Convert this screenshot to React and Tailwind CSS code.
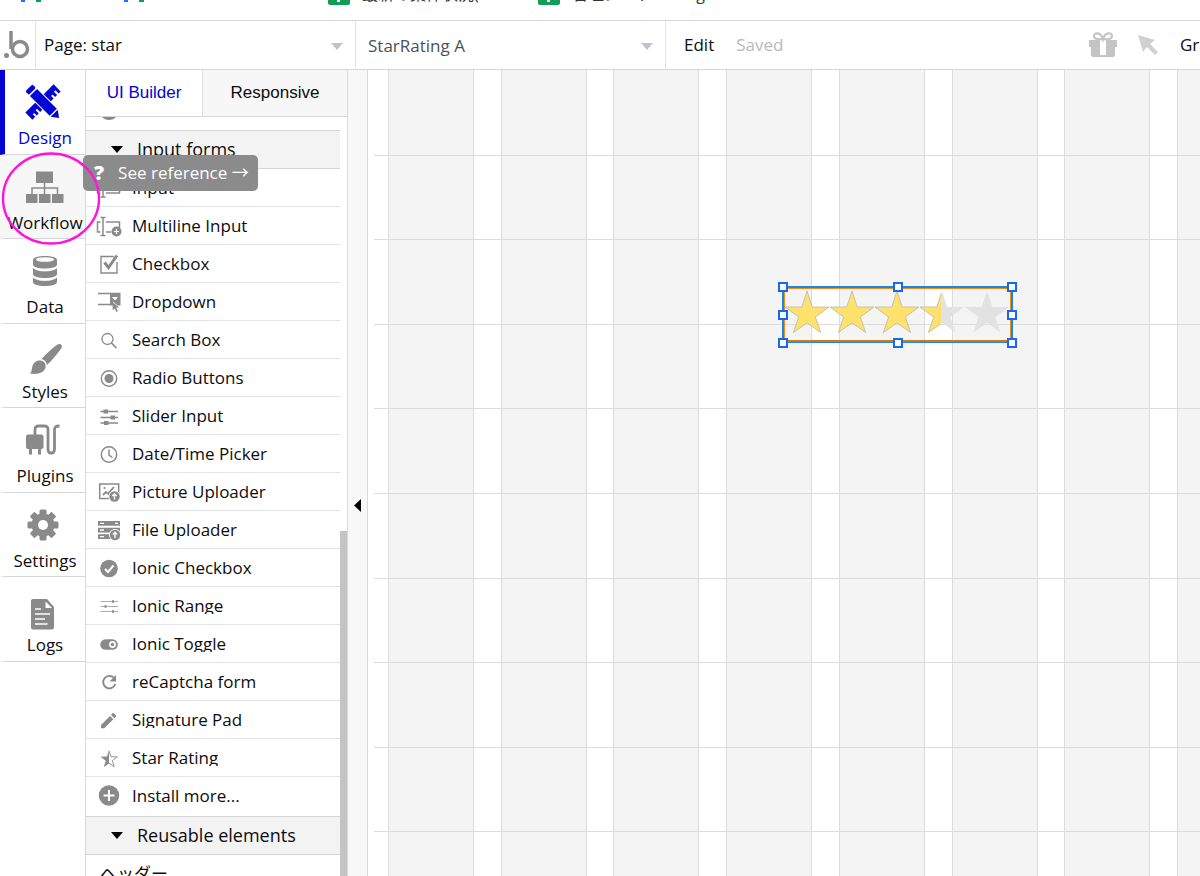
import { useState } from 'react';

const ICON = '#8a8a8a';

const STAR_POINTS = '22,0 27.2,16 44,16 30.4,25.9 35.6,41.5 22,31.8 8.4,41.5 13.6,25.9 0,16 16.8,16';

// Navigation icons, 40x40 box
const navIcons = {
  design: (
    <g fill="#0205d3">
      <g transform="rotate(45 18 20)">
        <rect x="-2" y="15" width="5" height="10" rx="1.5" />
        <path d="M4.500 15h28v10h-28z" />
        <path d="M33.800 15l7 5-7 5z" />
      </g>
      <g transform="rotate(-45 18 20)">
        <path d="M-2 15H12v10H9v-4.500H7V25H4v-3.500H2V25h-4z" />
        <path d="M24 15h14v10h-3v-4.500h-2V25h-3v-3.500h-2V25h-4z" />
      </g>
    </g>
  ),
  workflow: (
    <g fill={ICON}>
      <path d="M11 4.500h17v11.500H11zM1 27h11.500v9H1zM14 27h11.500v9H14zM27 27h11.500v9H27z" />
      <path d="M7 27v-6h25.500v6M19.500 15v12" fill="none" stroke={ICON} strokeWidth="1.500" />
    </g>
  ),
  data: (
    <g fill={ICON}>
      <path d="M8 9c0-5.300 24-5.300 24 0v4.500c0 5.300-24 5.300-24 0z" />
      <ellipse cx="20" cy="8.500" rx="9" ry="2.300" fill="#fff" />
      <path d="M8 17c4 4.500 20 4.500 24 0v6c0 5.300-24 5.300-24 0z" />
      <path d="M8 26.500c4 4.500 20 4.500 24 0V31c0 5.300-24 5.300-24 0z" />
    </g>
  ),
  styles: (
    <g fill={ICON}>
      <path d="M32.500 8.500c2-1.500 5.500 0 4 3.500C33 17 28 23.500 22 29c-.5-3-2.500-5.500-5.500-6C22 17 27 12.500 32.500 8.500z" />
      <path d="M15 24.500c4.500 0 7 4.500 5 8.500-2.500 5-10 5.500-15 4.500 2-2 1.500-4 2.500-7.500 1-3.500 4-5.500 7.500-5.500z" />
    </g>
  ),
  plugins: (
    <g>
      <rect x="1" y="14.500" width="17.500" height="14.500" rx="2" fill={ICON} />
      <path d="M5.500 28v6.500M14.500 28v6.500" stroke={ICON} strokeWidth="3" />
      <path d="M10 15v-5c0-3 1-4 4-4h5c3 0 4 1 4 4v19c0 5.500 6.500 5.500 6.500 0V10c0-3 1-4 5-4" fill="none" stroke={ICON} strokeWidth="2.800" />
    </g>
  ),
  settings: (
    <g fill={ICON} transform="translate(18 20)">
      {[0, 45, 90, 135].map((angle) => (
        <rect key={angle} x="-3.500" y="-15.500" width="7" height="31" rx="1.500" transform={`rotate(${angle})`} />
      ))}
      <circle r="11.500" />
      <circle r="5" fill="#fff" />
    </g>
  ),
  logs: (
    <g>
      <path d="M8 10h14l7 8v20.500a2 2 0 0 1-2 2H8a2 2 0 0 1-2-2V12a2 2 0 0 1 2-2z" fill={ICON} />
      <path d="M20.500 12.500v6.500H27z" fill="#fff" />
      <path d="M10 20h6M10 25h15M10 30h10M10 35h12.500" stroke="#fff" strokeWidth="1.600" />
    </g>
  ),
};

const navItems = [
  { id: 'design', label: 'Design' },
  { id: 'workflow', label: 'Workflow' },
  { id: 'data', label: 'Data' },
  { id: 'styles', label: 'Styles' },
  { id: 'plugins', label: 'Plugins' },
  { id: 'settings', label: 'Settings' },
  { id: 'logs', label: 'Logs' },
];

const uploadBadge = (cx, cy) => (
  <g>
    <circle cx={cx} cy={cy} r="6" fill="#fff" />
    <circle cx={cx} cy={cy} r="5.200" fill={ICON} />
    <path d={`M${cx} ${cy + 3}v-5.500M${cx - 2.2} ${cy - 0.5}l2.200-2.200 2.200 2.200`} fill="none" stroke="#fff" strokeWidth="1.400" />
  </g>
);

// Element icons, 26x26 box
const elementIcons = {
  input: <path d="M4.500 9H1.500v9h3M10 9h13.500v9H10M7 4v18M4.500 4h5M4.500 22h5" fill="none" stroke={ICON} strokeWidth="1.500" />,
  multiline: (
    <g fill="none" stroke={ICON} strokeWidth="1.500">
      <path d="M4.500 9H1.500v10h3M10 9h13.500v6M10 19h5M7 4.500v18M4.500 4.500h5M4.500 22.500h5" />
      <circle cx="20.500" cy="18.500" r="5" fill={ICON} stroke="none" />
      <path d="M20.500 16v5M18 18.500h5" stroke="#fff" strokeWidth="1.200" />
    </g>
  ),
  checkbox: (
    <g fill="none" stroke={ICON}>
      <path d="M18 5.500H5v16.500h16V11" strokeWidth="1.400" />
      <path d="M8.500 11.500l4 5L21 4.500" strokeWidth="3" />
    </g>
  ),
  dropdown: (
    <g>
      <path d="M2 4.500h13M2 15.500h13" stroke={ICON} strokeWidth="1.600" />
      <path d="M14 3.700h10.500V16.500h-3l-4.500-4v4h-3z" fill={ICON} />
      <path d="M16 8h6l-3 3.500z" fill="#fff" />
      <path d="M16.500 13l6.500 5.500-2.800.3 1.800 3.500-1.600.8-1.700-3.600-2 1.800z" fill={ICON} />
    </g>
  ),
  search: (
    <g fill="none" stroke={ICON} strokeWidth="1.300">
      <circle cx="11.500" cy="12" r="5.500" />
      <path d="M15.500 16l4.800 5" strokeWidth="1.800" />
    </g>
  ),
  radio: (
    <g>
      <circle cx="13" cy="13.500" r="7.700" fill="none" stroke={ICON} strokeWidth="1.400" />
      <circle cx="13" cy="13.500" r="4.500" fill={ICON} />
    </g>
  ),
  slider: (
    <g stroke={ICON}>
      <path d="M4.500 8.500h17.500M4.500 14.500h17.500M4.500 20h17.500" strokeWidth="1.300" />
      <path d="M7.500 8.500h4.500M14.500 14.500h4.500M8 20h4.500" strokeWidth="4.200" />
    </g>
  ),
  clock: (
    <g fill="none" stroke={ICON} strokeWidth="1.500">
      <circle cx="13" cy="13.500" r="7.700" />
      <path d="M13 8.500v5.500l3.500 2.500" />
    </g>
  ),
  picture: (
    <g>
      <path d="M3.700 5h19v14.500h-19z" fill="none" stroke={ICON} strokeWidth="1.500" />
      <path d="M7 16l3.500-3.500M10 13.500l2 1 6-6.500M12.500 16l2.500-3" fill="none" stroke={ICON} strokeWidth="1.800" />
      <circle cx="8.500" cy="9" r="1" fill={ICON} />
      {uploadBadge(18.5, 17.5)}
    </g>
  ),
  file: (
    <g>
      <path d="M2 4h22v4.800H2zM2 10.700h22v4.800H2zM2 17.200h22V22H2z" fill={ICON} />
      <path d="M4 6.400h4M4 13h4M4 19.600h4M19 6.400h3" stroke="#fff" strokeWidth="1.300" />
      {uploadBadge(19, 18)}
    </g>
  ),
  ionicCheck: (
    <g>
      <circle cx="13" cy="13.500" r="8.800" fill={ICON} />
      <path d="M9 14l3 3 5.500-6.500" fill="none" stroke="#fff" strokeWidth="2" />
    </g>
  ),
  range: (
    <g stroke={ICON}>
      <path d="M4.500 8.500h17.500M4.500 13.500h17.500M4.500 18.500h17.500" strokeWidth="0.700" />
      <path d="M16 8.500h2M8.500 13.500h2M16 18.500h2" strokeWidth="2.400" />
    </g>
  ),
  toggle: (
    <g>
      <rect x="4.300" y="8.200" width="17.500" height="10.600" rx="5.300" fill={ICON} />
      <circle cx="16.500" cy="13.500" r="2.600" fill="none" stroke="#fff" strokeWidth="1.600" />
    </g>
  ),
  recaptcha: (
    <g>
      <path d="M18 9a6.200 6.200 0 1 0 1.300 6" fill="none" stroke={ICON} strokeWidth="1.800" />
      <path d="M20 6v6.500h-6.500z" fill={ICON} />
    </g>
  ),
  pencil: <path d="M5 18v3.300h3.300l9-9-3.300-3.300zM20 9.700a.9.900 0 0 0 0-1.300l-2.200-2.200a.9.900 0 0 0-1.300 0l-1.500 1.600 3.300 3.400z" fill={ICON} />,
  star: (
    <g>
      <path d="M13 6l2 5.800 6.200.1-4.900 3.800 1.800 6L13 18.100" fill="none" stroke={ICON} strokeWidth="0.900" />
      <path d="M13 5v13.500l-5.300 3.800 2-6.500-5.200-4.100 6.500-.1z" fill={ICON} />
    </g>
  ),
  install: (
    <g>
      <circle cx="13" cy="12.500" r="10.200" fill={ICON} />
      <path d="M13 7v11M7.500 12.500h11" stroke="#fff" strokeWidth="2" />
    </g>
  ),
};

const elements = [
  { icon: 'input', label: 'Input' },
  { icon: 'multiline', label: 'Multiline Input' },
  { icon: 'checkbox', label: 'Checkbox' },
  { icon: 'dropdown', label: 'Dropdown' },
  { icon: 'search', label: 'Search Box' },
  { icon: 'radio', label: 'Radio Buttons' },
  { icon: 'slider', label: 'Slider Input' },
  { icon: 'clock', label: 'Date/Time Picker' },
  { icon: 'picture', label: 'Picture Uploader' },
  { icon: 'file', label: 'File Uploader' },
  { icon: 'ionicCheck', label: 'Ionic Checkbox', plugin: true },
  { icon: 'range', label: 'Ionic Range', plugin: true },
  { icon: 'toggle', label: 'Ionic Toggle', plugin: true },
  { icon: 'recaptcha', label: 'reCaptcha form', plugin: true },
  { icon: 'pencil', label: 'Signature Pad', plugin: true },
  { icon: 'star', label: 'Star Rating', plugin: true },
  { icon: 'install', label: 'Install more...' },
];

const SheetIcon = () => (
  <svg width="22" height="22" viewBox="0 0 22 22" className="shrink-0">
    <rect width="22" height="22" rx="2" fill="#0f9d58" />
    <path d="M8 5h8v10h-2v2h-2v2H9v-4H8z" fill="#fff" />
  </svg>
);

const ShortcutIcon = () => (
  <svg width="22" height="19" viewBox="0 0 22 19" className="shrink-0">
    <path d="M1 19V8h4v11z" fill="#1a73ff" />
    <path d="M16 19V8h5v11z" fill="#0f9d58" />
  </svg>
);

const BookmarkBar = () => (
  <div className="h-[21px] shrink-0 overflow-hidden border-b border-[#d3d7d8] text-[16px] leading-[22px] text-[#333]">
    <div className="-mt-[17px] flex h-[22px] whitespace-nowrap pl-5">
      <div className="w-[103px]"><ShortcutIcon /></div>
      <div className="w-[205px]"><ShortcutIcon /></div>
      <a href="#" className="flex w-[210px] gap-3"><SheetIcon />最新の案件状況(</a>
      <a href="#" className="flex gap-3"><SheetIcon />管理シート - Google</a>
    </div>
  </div>
);

const PagePicker = ({ label, value, className }) => (
  <div className={`relative shrink-0 border-r border-[#dfe5e8] ${className}`}>
    <select aria-label={label} className="h-full w-full appearance-none bg-transparent outline-none" defaultValue={value}>
      <option>{value}</option>
    </select>
    <svg width="12" height="7" viewBox="0 0 12 7" className="pointer-events-none absolute right-3 top-[22px]">
      <path d="M0 0h12L6 7z" fill="#bfc4cc" />
    </svg>
  </div>
);

const TopBar = () => (
  <header className="flex h-[49px] shrink-0 items-stretch border-b border-[#d6d8d8] bg-white">
    <div className="flex w-9 shrink-0 items-center border-r border-[#dfe5e8] pl-1">
      <svg width="26" height="28" viewBox="0 0 26 28">
        <circle cx="2.500" cy="24.500" r="2.500" fill={ICON} />
        <circle cx="16" cy="18" r="7.500" fill="none" stroke={ICON} strokeWidth="3.500" />
        <path d="M7 0v18" stroke={ICON} strokeWidth="3.500" />
      </svg>
    </div>
    <PagePicker label="Page" value="Page: star" className="w-80 pl-2" />
    <PagePicker label="Element" value="StarRating A" className="w-[310px] pl-3 pt-px text-[#4b5257]" />
    <button className="ml-[18px] mr-[22px]">Edit</button>
    <span className="self-center text-[#b9b9b9]">Saved</span>
    <div className="ml-auto flex items-center">
      <svg width="30" height="28" viewBox="0 0 30 28" className="mr-5">
        <path d="M1 9h28v7h-2v8a2 2 0 0 1-2 2H5a2 2 0 0 1-2-2v-8H1z" fill="#c4c4c4" />
        <path d="M12 9h6v15h-6z" fill="#fff" />
        <path d="M15 8c-2-7-9-7-9-3 0 3 5 4 9 3 4 1 9 0 9-3 0-4-7-4-9 3z" fill="none" stroke="#c4c4c4" strokeWidth="2.200" />
      </svg>
      <svg width="22" height="22" viewBox="0 0 22 22" className="mr-5">
        <path d="M0 1l17 5-5 4 8 8-3 3-8-8-4 5z" fill="#d0d0d0" />
      </svg>
      <button className="w-5 overflow-hidden whitespace-nowrap text-left">Grid &amp; borders</button>
    </div>
  </header>
);

const SideNav = () => (
  <nav className="w-[86px] shrink-0 border-r border-[#d8d8d8] bg-white">
    <div className="grid h-[592px] grid-rows-7">
      {navItems.map((item) => (
        <button
          key={item.id}
          className={`flex flex-col items-center border-b border-l-[5px] border-b-[#d6d6d6] pt-3 ${
            item.id === 'design' ? 'border-l-[#0205d3] text-[#0205d3]' : 'border-l-transparent'
          } ${item.id === 'workflow' ? 'bg-[#f7f7f7]' : ''}`}
        >
          <svg width="40" height="42" viewBox="0 0 40 42" className="shrink-0">{navIcons[item.id]}</svg>
          <span className="mt-0.5 leading-6">{item.label}</span>
        </button>
      ))}
    </div>
  </nav>
);

const SectionHeader = ({ children }) => (
  <button className="flex h-[39px] w-full shrink-0 items-center gap-[14px] border-y border-[#d3d5d6] bg-[#f3f3f3] pl-[25px] text-[18px]">
    <svg width="12" height="7" viewBox="0 0 12 7"><path d="M0 0h12L6 7z" fill="#000" /></svg>
    {children}
  </button>
);

const ElementPanel = () => {
  const [tab, setTab] = useState('ui');

  return (
    <aside className="flex w-[262px] shrink-0 flex-col border-r border-[#d8dadb] bg-white">
      <div className="flex h-[47px] shrink-0 border-b border-[#d3d5d6] font-['Liberation_Sans',Arial,sans-serif] text-[17px]">
        <button
          className={`w-[117px] border-r border-[#e0e0e0] ${tab === 'ui' ? 'text-[#0205d3]' : 'bg-[#f7f7f7]'}`}
          onClick={() => setTab('ui')}
        >
          UI Builder
        </button>
        <button
          className={`flex-1 ${tab === 'responsive' ? 'text-[#0205d3]' : 'bg-[#f7f7f7]'}`}
          onClick={() => setTab('responsive')}
        >
          Responsive
        </button>
      </div>
      <div className="flex min-h-0 flex-1 overflow-hidden">
        <div className="flex min-w-0 flex-1 flex-col">
          {/* Tail of the previous section, scrolled away */}
          <div className="h-[13px] shrink-0 overflow-hidden pl-4">
            <svg width="14" height="3" viewBox="0 0 14 3"><path d="M0 0h14c-3 4-11 4-14 0z" fill={ICON} /></svg>
          </div>
          <SectionHeader>Input forms</SectionHeader>
          <ul className="shrink-0 pb-px">
            {elements.map((el) => (
              <li key={el.label} className="flex h-[38px] items-center gap-[10px] border-b border-[#e0e4e6] pl-[10px] last:border-b-0">
                <svg width="26" height="26" viewBox="0 0 26 26" className="shrink-0">{elementIcons[el.icon]}</svg>
                <div className="h-6">
                  <div className={`leading-6 ${el.plugin ? 'h-5 overflow-hidden' : ''}`}>{el.label}</div>
                </div>
              </li>
            ))}
          </ul>
          <SectionHeader>Reusable elements</SectionHeader>
          <div className="flex h-[38px] shrink-0 items-center pl-[14px]">ヘッダー</div>
        </div>
        <div className="mt-[414px] w-[7px] shrink-0 bg-[#c4c4c4]"></div>
      </div>
    </aside>
  );
};

const handles = [
  'left-0 top-0', 'left-1/2 top-0', 'left-full top-0',
  'left-0 top-1/2', 'left-full top-1/2',
  'left-0 top-full', 'left-1/2 top-full', 'left-full top-full',
];

const RatingElement = () => (
  <div className="absolute left-[414px] top-[216px] h-[57px] w-[231px] border-2 border-b border-[#1a84f0]">
    <div className="h-full w-full border border-b-2 border-[#ee8c1c] border-b-[#d97706]">
      <svg width="226" height="46" viewBox="0 0 226 46">
        <defs>
          <clipPath id="half"><rect width="21" height="46" /></clipPath>
        </defs>
        {[0, 1, 2, 3, 4].map((i) => (
          <g key={i} transform={`translate(${i * 45} 2)`}>
            <polygon points={STAR_POINTS} fill="#e2e2e2" />
            {i < 4 && (
              <polygon
                points={STAR_POINTS}
                fill="#ffe16b"
                stroke="#b9b9b0"
                strokeWidth="0.800"
                clipPath={i === 3 ? 'url(#half)' : undefined}
              />
            )}
          </g>
        ))}
      </svg>
    </div>
    <div className="absolute -inset-px">
      {handles.map((pos) => (
        <span key={pos} className={`absolute size-[10px] -translate-x-1/2 -translate-y-1/2 border-2 border-[#1767f2] bg-white ${pos}`}></span>
      ))}
    </div>
  </div>
);

const Canvas = () => (
  <main className="relative grid min-w-0 flex-1 overflow-hidden bg-white">
    <div className="col-start-1 row-start-1 ml-5 flex w-[875px] justify-between">
      {Array.from({ length: 8 }).map((_, i) => (
        <div key={i} className="w-[86px] border-x border-[#dcdcdc] bg-[#f4f4f4]"></div>
      ))}
    </div>
    <div className="col-start-1 row-start-1 ml-[6px] mt-px grid h-[846px] grid-rows-10">
      {Array.from({ length: 10 }).map((_, i) => (
        <div key={i} className="border-b border-[#dcdcdc]"></div>
      ))}
    </div>
    <RatingElement />
  </main>
);

export default function App() {
  return (
    <div className="relative flex h-screen flex-col overflow-hidden bg-white font-['Open_Sans','Noto_Sans_CJK_JP',sans-serif] text-[17px] text-[#0d0d0d]">
      <BookmarkBar />
      <TopBar />
      <div className="flex min-h-0 flex-1">
        <SideNav />
        <ElementPanel />
        <div className="w-5 shrink-0 border-r border-[#d8dadb] bg-[#f8f8f8] pl-[6px] pt-[429px]">
          <button aria-label="Collapse panel" className="block">
            <svg width="7" height="13" viewBox="0 0 7 13"><path d="M7 0v13L0 6.500z" fill="#000" /></svg>
          </button>
        </div>
        <Canvas />
      </div>

      {/* Reference tooltip and the highlight ring around Workflow */}
      <a href="#" className="absolute left-[83px] top-[155px] flex h-9 w-[175px] items-center gap-[14px] whitespace-nowrap rounded-[5px] bg-[#8b8b8b] pl-[11px] text-white">
        <span className="text-[20px] font-extrabold leading-6">?</span>
        See reference →
      </a>
      <svg width="102" height="94" viewBox="0 0 102 94" className="pointer-events-none absolute left-[1px] top-[152px]">
        <ellipse cx="50" cy="46.500" rx="48" ry="45" fill="none" stroke="#ff14dc" strokeWidth="2.400" />
      </svg>
    </div>
  );
}
